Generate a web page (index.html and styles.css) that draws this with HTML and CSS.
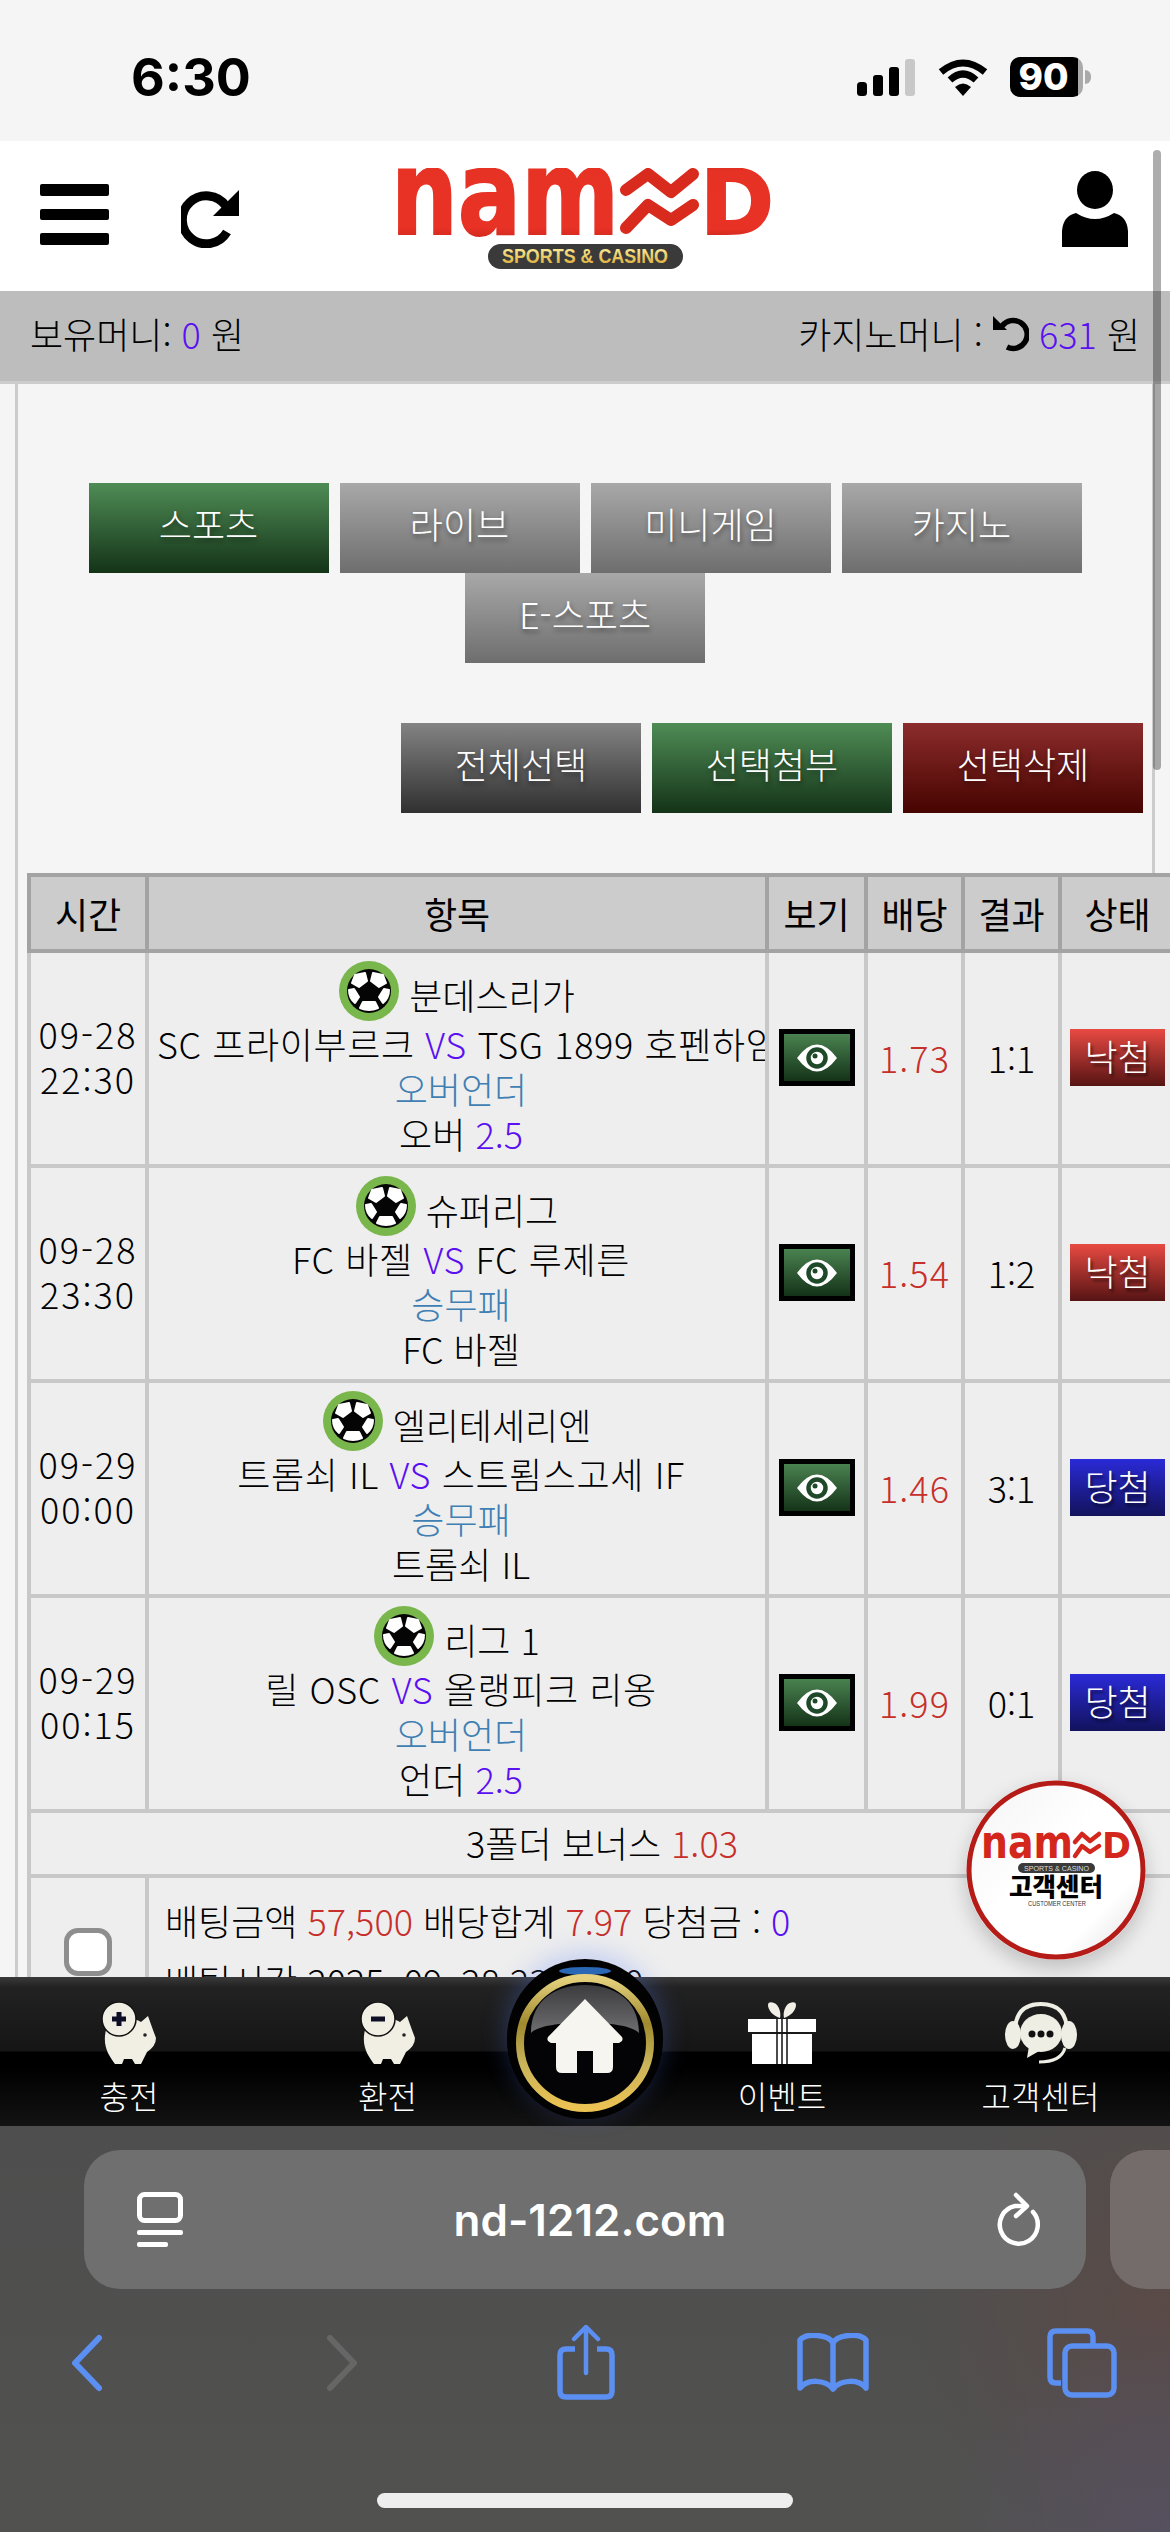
FILE: index.html
```html
<!DOCTYPE html>
<html lang="ko">
<head>
<meta charset="utf-8">
<title>NAMED</title>
<link rel="stylesheet" href="styles.css">
</head>
<body>
<div class="status">
  <span class="clock">6:30</span>
  <div class="status-icons">
    <svg class="signal" width="58" height="37" viewBox="0 0 58 37"><rect x="0" y="23" width="10" height="14" rx="3.500"/><rect x="16" y="16" width="10" height="21" rx="3"/><rect x="32" y="8" width="10" height="29" rx="3"/><rect x="48" y="0" width="10" height="37" rx="3" fill="#c8c8c8"/></svg>
    <svg class="wifi" width="50" height="37" viewBox="0 0 50 37"><path d="M3 13 Q25 -5 47 13" fill="none" stroke="#000" stroke-width="7"/><path d="M12 21 Q25 9 38 21" fill="none" stroke="#000" stroke-width="7"/><path d="M17 28 Q25 21 33 28 L25 37Z"/></svg>
    <div class="battery"><span class="batt-fill">90</span><span class="batt-nub"></span></div>
  </div>
</div>

<main class="main">
  <header class="topbar">
    <div class="top-left">
      <div class="burger"><span></span><span></span><span></span></div>
      <svg class="reload" width="58" height="60" viewBox="0 0 58 60"><path d="M45 18 A24 24 0 1 0 46 44" fill="none" stroke="#000" stroke-width="9"/><path d="M58 2 V28 H32Z"/></svg>
    </div>
    <svg class="logo" width="374" height="101" viewBox="0 0 374 101">
      <defs>
        <linearGradient id="red" x1="0" y1="0" x2="0" y2="1"><stop offset="0" stop-color="#a81c16"/><stop offset=".2" stop-color="#e63224"/><stop offset=".75" stop-color="#e83225"/><stop offset="1" stop-color="#9c1510"/></linearGradient>
        <linearGradient id="gold" x1="0" y1="0" x2="0" y2="1"><stop offset="0" stop-color="#fff6a8"/><stop offset="1" stop-color="#d9a52e"/></linearGradient>
      </defs>
      <text class="logo-word" x="-7" y="66" font-size="118" textLength="228" lengthAdjust="spacingAndGlyphs" fill="url(#red)" stroke="url(#red)" stroke-width="2">nam</text>
      <path d="M228 22 L250 6 L273 24 L295 6 M228 60 L250 37 L273 52 L295 37" fill="none" stroke="#d92a1e" stroke-width="12" stroke-linecap="round" stroke-linejoin="round"/>
      <text class="logo-word" x="302" y="66" font-size="90" textLength="74" lengthAdjust="spacingAndGlyphs" fill="url(#red)" stroke="url(#red)" stroke-width="2">D</text>
      <rect x="90" y="76" width="195" height="25" rx="12.500" fill="#3a3a3a"/>
      <text class="logo-sub" x="104" y="95" font-size="20" textLength="166" lengthAdjust="spacingAndGlyphs" fill="url(#gold)">SPORTS &amp; CASINO</text>
    </svg>
    <svg class="user" width="66" height="76" viewBox="0 0 66 76"><ellipse cx="33" cy="19" rx="18" ry="19"/><path d="M0 76 V60 Q1 45 14 42 Q33 54 52 42 Q65 45 66 60 V76Z"/></svg>
  </header>

  <div class="money">
    <span>보유머니: <b class="num">0</b> 원</span>
    <span class="casino">카지노머니 :
      <svg class="undo" width="36" height="36" viewBox="0 0 36 36"><path d="M9 10 A14 14 0 1 1 14 31" fill="none" stroke="#000" stroke-width="5.500"/><path d="M0 0 V14 H14Z"/></svg>
      <b class="num">631</b> 원</span>
  </div>

  <section class="content">
    <nav class="tabs">
      <a class="btn green">스포츠</a>
      <a class="btn grey">라이브</a>
      <a class="btn grey">미니게임</a>
      <a class="btn grey">카지노</a>
      <a class="btn grey">E-스포츠</a>
    </nav>
    <div class="actions">
      <a class="btn dark">전체선택</a>
      <a class="btn green">선택첨부</a>
      <a class="btn maroon">선택삭제</a>
    </div>

    <table class="bets">
      <colgroup><col class="c-time"><col class="c-item"><col class="c-view"><col class="c-odds"><col class="c-res"><col class="c-state"></colgroup>
      <thead><tr><th>시간</th><th>항목</th><th>보기</th><th>배당</th><th>결과</th><th>상태</th></tr></thead>
      <tbody>
        <tr class="bet">
          <td class="time">09-28<br>22:30</td>
          <td class="item"><div class="league"><svg class="ball" viewBox="0 0 60 60"><use href="#ball"/></svg><span>분데스리가</span></div><div class="teams">SC 프라이부르크 <span class="num">VS</span> TSG 1899 호펜하임</div><div class="market">오버언더</div><div>오버 <span class="num">2.5</span></div></td>
          <td><span class="eye"><svg width="40" height="28" viewBox="0 0 40 28"><use href="#eye"/></svg></span></td>
          <td class="odds">1.73</td><td>1:1</td><td><span class="state lose">낙첨</span></td>
        </tr>
        <tr class="bet">
          <td class="time">09-28<br>23:30</td>
          <td class="item"><div class="league"><svg class="ball" viewBox="0 0 60 60"><use href="#ball"/></svg><span>슈퍼리그</span></div><div class="teams">FC 바젤 <span class="num">VS</span> FC 루제른</div><div class="market">승무패</div><div>FC 바젤</div></td>
          <td><span class="eye"><svg width="40" height="28" viewBox="0 0 40 28"><use href="#eye"/></svg></span></td>
          <td class="odds">1.54</td><td>1:2</td><td><span class="state lose">낙첨</span></td>
        </tr>
        <tr class="bet">
          <td class="time">09-29<br>00:00</td>
          <td class="item"><div class="league"><svg class="ball" viewBox="0 0 60 60"><use href="#ball"/></svg><span>엘리테세리엔</span></div><div class="teams">트롬쇠 IL <span class="num">VS</span> 스트룀스고세 IF</div><div class="market">승무패</div><div>트롬쇠 IL</div></td>
          <td><span class="eye"><svg width="40" height="28" viewBox="0 0 40 28"><use href="#eye"/></svg></span></td>
          <td class="odds">1.46</td><td>3:1</td><td><span class="state win">당첨</span></td>
        </tr>
        <tr class="bet">
          <td class="time">09-29<br>00:15</td>
          <td class="item"><div class="league"><svg class="ball" viewBox="0 0 60 60"><use href="#ball"/></svg><span>리그 1</span></div><div class="teams">릴 OSC <span class="num">VS</span> 올랭피크 리옹</div><div class="market">오버언더</div><div>언더 <span class="num">2.5</span></div></td>
          <td><span class="eye"><svg width="40" height="28" viewBox="0 0 40 28"><use href="#eye"/></svg></span></td>
          <td class="odds">1.99</td><td>0:1</td><td><span class="state win">당첨</span></td>
        </tr>
        <tr class="bonus"><td colspan="6">3폴더 보너스 <span class="odds">1.03</span></td></tr>
        <tr class="summary">
          <td><span class="check"></span></td>
          <td colspan="5" class="sum-text"><div>배팅금액 <span class="odds">57,500</span> 배당합계 <span class="odds">7.97</span> 당첨금 : <span class="num">0</span></div><div>배팅시간 2025. 09. 28 23:10:10</div></td>
        </tr>
      </tbody>
    </table>
  </section>

  <aside class="support">
    <svg width="180" height="180" viewBox="0 0 180 180">
      <defs>
        <linearGradient id="plate" x1="0" y1="0" x2="1" y2="1"><stop offset="0" stop-color="#f4f4f4"/><stop offset=".45" stop-color="#fff"/><stop offset=".75" stop-color="#fff"/><stop offset="1" stop-color="#dcdcdc"/></linearGradient>
      </defs>
      <circle cx="90" cy="90" r="87" fill="url(#plate)" stroke="#b51c17" stroke-width="5"/>
      <text class="logo-word" x="15" y="78" font-size="46" textLength="92" lengthAdjust="spacingAndGlyphs" fill="#d3261c">nam</text>
      <path d="M109 62 L116 54 L124 61 L133 54 M109 76 L116 66 L124 72 L133 66" fill="none" stroke="#d3261c" stroke-width="4.500" stroke-linecap="round" stroke-linejoin="round"/>
      <text class="logo-word" x="136" y="78" font-size="36" textLength="29" lengthAdjust="spacingAndGlyphs" fill="#d3261c">D</text>
      <rect x="52" y="83" width="77" height="10" rx="5" fill="#3a3a3a"/>
      <text class="support-sub" x="58" y="91" font-size="8" textLength="65" lengthAdjust="spacingAndGlyphs" fill="#ddd">SPORTS &amp; CASINO</text>
      <text class="support-ko" x="43" y="116" font-size="25" textLength="94" lengthAdjust="spacingAndGlyphs">고객센터</text>
      <text class="support-en" x="62" y="126" font-size="6.500" textLength="58" lengthAdjust="spacingAndGlyphs" fill="#333">CUSTOMER CENTER</text>
    </svg>
  </aside>
  <div class="thumb"></div>
</main>

<nav class="bottom">
  <a class="bn">
    <svg width="56" height="62" viewBox="0 0 56 62"><use href="#pig"/><path d="M18 10 V24 M11 17 H25" stroke="#0e0e24" stroke-width="5" fill="none"/></svg>
    <span>충전</span>
  </a>
  <a class="bn">
    <svg width="56" height="62" viewBox="0 0 56 62"><use href="#pig"/><path d="M11 17 H25" stroke="#0e0e24" stroke-width="5" fill="none"/></svg>
    <span>환전</span>
  </a>
  <span class="bn-gap"></span>
  <a class="bn">
    <svg width="70" height="62" viewBox="0 0 70 62"><path d="M33 16 C26 14 21 8 21 3 C21 -1 27 0 30 3 C33 7 34 12 33 16Z M37 16 C44 14 49 8 49 3 C49 -1 43 0 40 3 C37 7 36 12 37 16Z" fill="#f1efe6"/><rect x="1" y="17" width="68" height="13" fill="#fff"/><rect x="5" y="32" width="60" height="30" fill="#fff"/><path d="M30 17 V62 M40 17 V62 M35 17 V62" stroke="#111" stroke-width="1.500"/></svg>
    <span>이벤트</span>
  </a>
  <a class="bn">
    <svg width="72" height="62" viewBox="0 0 72 62"><path d="M10 30 C10 8 22 2 36 2 C50 2 62 8 62 30" fill="none" stroke="#efeee4" stroke-width="4"/><ellipse cx="8" cy="33" rx="8" ry="14" fill="#efeee4"/><ellipse cx="64" cy="33" rx="8" ry="14" fill="#efeee4"/><ellipse cx="36" cy="31" rx="21" ry="19" fill="#efeee4"/><path d="M24 44 L22 56 L36 48Z" fill="#efeee4"/><path d="M60 46 Q56 60 34 60" fill="none" stroke="#efeee4" stroke-width="3"/><circle cx="27" cy="32" r="3.500" fill="#111"/><circle cx="36" cy="32" r="3.500" fill="#111"/><circle cx="45" cy="32" r="3.500" fill="#111"/></svg>
    <span>고객센터</span>
  </a>
  <a class="home">
    <svg width="156" height="160" viewBox="0 0 156 160">
      <defs>
        <linearGradient id="ring" x1="0" y1="0" x2="0" y2="1"><stop offset="0" stop-color="#e6d27e"/><stop offset=".35" stop-color="#a08a2e"/><stop offset=".65" stop-color="#c9b35a"/><stop offset="1" stop-color="#ecc253"/></linearGradient>
        <linearGradient id="dome" x1="0" y1="0" x2="0" y2="1"><stop offset="0" stop-color="#3c3c3e"/><stop offset="1" stop-color="#6e6e70"/></linearGradient>
      </defs>
      <ellipse cx="78" cy="80" rx="78" ry="80" fill="#020203"/>
      <ellipse cx="78" cy="12" rx="26" ry="4" fill="#2a67b5"/>
      <ellipse cx="78" cy="84" rx="65" ry="65" fill="#040406" stroke="url(#ring)" stroke-width="8"/>
      <path d="M24 74 C24 40 50 26 78 26 C106 26 132 40 132 74 C120 60 36 60 24 74Z" fill="url(#dome)"/>
      <path d="M78 40 L115 78 Q117 82 112 84 L106 84 V108 Q106 114 100 114 H86 V92 H70 V114 H55 Q49 114 49 108 V84 L44 84 Q39 82 41 78Z" fill="#f6f5ef"/>
    </svg>
  </a>
</nav>

<footer class="safari">
  <div class="url-row">
    <div class="url">
      <svg width="46" height="56" viewBox="0 0 46 56"><rect x="2.500" y="2.500" width="41" height="26" rx="5" fill="none" stroke="#fff" stroke-width="5"/><rect x="0" y="38" width="46" height="5" rx="2" fill="#fff"/><rect x="0" y="50" width="31" height="5" rx="2" fill="#fff"/></svg>
      <span>nd-1212.com</span>
      <svg width="46" height="56" viewBox="0 0 46 56"><path d="M36 20 A19 19 0 1 1 18 14 L26 14" fill="none" stroke="#fff" stroke-width="4.500" stroke-linecap="round"/><path d="M19 3 L30 14 L19 24" fill="none" stroke="#fff" stroke-width="4.500" stroke-linecap="round" stroke-linejoin="round"/></svg>
    </div>
    <div class="url-next"></div>
  </div>
  <div class="tools">
    <svg width="34" height="58" viewBox="0 0 34 58"><path d="M29 4 L5 29 L29 54" fill="none" stroke="#5b8ff2" stroke-width="6" stroke-linecap="round" stroke-linejoin="round"/></svg>
    <svg class="fwd" width="34" height="58" viewBox="0 0 34 58"><path d="M5 4 L29 29 L5 54" fill="none" stroke="#666" stroke-width="6" stroke-linecap="round" stroke-linejoin="round"/></svg>
    <svg width="58" height="75" viewBox="0 0 58 75"><path d="M18 24 H9 Q3 24 3 30 V66 Q3 72 9 72 H49 Q55 72 55 66 V30 Q55 24 49 24 H40" fill="none" stroke="#5b8ff2" stroke-width="5.500"/><path d="M29 48 V4 M17 14 L29 2 L41 14" fill="none" stroke="#5b8ff2" stroke-width="4.500" stroke-linecap="round"/></svg>
    <svg width="72" height="60" viewBox="0 0 72 60"><path d="M36 10 C32 2 10 -1 3 7 V55 C10 46 28 46 36 56 C44 46 62 46 69 55 V7 C62 -1 40 2 36 10 V52" fill="none" stroke="#5b8ff2" stroke-width="5.500" stroke-linejoin="round"/></svg>
    <svg width="70" height="70" viewBox="0 0 70 70"><path d="M14 55 H9 Q3 55 3 49 V9 Q3 3 9 3 H40 Q46 3 46 9 V16" fill="none" stroke="#5b8ff2" stroke-width="5.500"/><rect x="18" y="18" width="49" height="49" rx="7" fill="none" stroke="#5b8ff2" stroke-width="5.500"/></svg>
  </div>
  <div class="home-bar"></div>
</footer>

<svg class="defs" width="0" height="0">
  <defs>
    <g id="ball">
      <circle cx="30" cy="30" r="30" fill="#79b64c"/>
      <circle cx="30" cy="30" r="22" fill="#050505"/>
      <path d="M16 14 L26 12 L28 20 L20 26 L13 22Z" fill="#fff" stroke="#fff" stroke-width="2" stroke-linejoin="round"/>
      <path d="M44 14 L34 12 L32 20 L40 26 L47 22Z" fill="#fff" stroke="#fff" stroke-width="2" stroke-linejoin="round"/>
      <path d="M10 29 L15 28 L20 36 L16 42 Q10 37 10 29Z" fill="#fff" stroke="#fff" stroke-width="2" stroke-linejoin="round"/>
      <path d="M50 29 L45 28 L40 36 L44 42 Q50 37 50 29Z" fill="#fff" stroke="#fff" stroke-width="2" stroke-linejoin="round"/>
      <path d="M24 41 H36 L39 47 Q30 51 21 47Z" fill="#fff" stroke="#fff" stroke-width="2" stroke-linejoin="round"/>
    </g>
    <g id="eye">
      <path d="M0 14 Q20 -13 40 14 Q20 41 0 14Z" fill="#fff"/>
      <circle cx="20" cy="14" r="8.500" fill="#fff" stroke="#1f4a2a" stroke-width="4.500"/>
      <circle cx="18" cy="12" r="2.500" fill="#1f4a2a"/>
    </g>
    <g id="pig">
      <path d="M5 28 C1 44 8 54 14 62 H21 L23 57 H31 L34 62 H40 L46 50 Q55 44 55 36 L52 28 L47 14 L40 20 C30 14 14 16 5 28Z" fill="#f1efe4"/>
      <circle cx="18" cy="17" r="17" fill="#f1efe4" stroke="#111" stroke-width="1.500"/>
      <circle cx="44" cy="33" r="1.800" fill="#222"/>
    </g>
  </defs>
</svg>
</body>
</html>
```

FILE: styles.css
```css
* { box-sizing: border-box; }
html, body { margin: 0; padding: 0; }
body {
  width: 1170px;
  height: 2532px;
  overflow: hidden;
  display: flex;
  flex-direction: column;
  background: #f5f5f5;
  color: #000;
  font-family: "Noto Sans CJK KR", "Noto Sans", sans-serif;
  font-weight: 300;
  font-size: 36px;
  line-height: 45px;
}
.defs { position: absolute; }

/* status bar */
.status {
  height: 141px;
  flex: none;
  display: flex;
  justify-content: space-between;
  align-items: flex-start;
  padding: 49px 79px 0 131px;
}
.clock { font: 700 52px/58px Inter, sans-serif; }
.status-icons { display: flex; align-items: flex-start; padding-top: 10px; }
.signal { margin-right: 23px; }
.wifi { margin-right: 22px; }
.battery { display: flex; align-items: center; margin-top: -2px; }
.batt-fill {
  width: 73px; height: 40px; border-radius: 10px;
  background: linear-gradient(90deg, #000 93%, #aaa 93%);
  color: #fff;
  font: 800 37px/40px Inter, sans-serif;
  text-align: center;
  padding-right: 6px;
}
.batt-nub { width: 6px; height: 14px; margin-left: 2px; background: #aaa; border-radius: 0 6px 6px 0; }

/* main */
.main { flex: 1; min-height: 0; position: relative; overflow: hidden; }
.topbar {
  height: 150px;
  background: #fff;
  display: grid;
  grid-template-columns: 1fr auto 1fr;
  align-items: start;
}
.top-left { display: flex; align-items: flex-start; gap: 72px; padding: 43px 0 0 40px; }
.burger { width: 69px; display: flex; flex-direction: column; gap: 13px; }
.burger span { display: block; height: 11.500px; background: #000; border-radius: 2px; }
.reload { margin-top: 4px; }
.logo { margin-top: 27px; }
.logo-word { font-family: "DejaVu Sans", sans-serif; font-weight: 700; }
.logo-sub { font-family: "Liberation Sans", sans-serif; font-weight: 700; }
.user { justify-self: end; margin: 30px 42px 0 0; }

.money {
  height: 93px;
  padding: 0 30px 6px 30px;
  background: #bdbdbd;
  border-bottom: 3px solid #ccc;
  display: flex;
  justify-content: space-between;
  align-items: center;
  white-space: nowrap;
}
.num { color: #5a10f0; font-weight: 300; }
.undo { vertical-align: -3px; }
.odds { color: #c62f2a; }

.content {
  margin-left: 15px;
  width: 1140px;
  min-height: 1500px;
  border-left: 3px solid #ccc;
  border-right: 3px solid #ccc;
  padding: 99px 0 0 9px;
}
.tabs {
  width: 1134px;
  margin-left: -9px;
  padding: 0 40px;
  display: flex;
  flex-wrap: wrap;
  justify-content: center;
  column-gap: 11px;
}
.actions {
  display: flex;
  justify-content: flex-end;
  column-gap: 11px;
  margin: 60px 0 60px;
  width: 1116px;
}
.btn {
  width: 240px;
  height: 90px;
  display: flex;
  align-items: center;
  justify-content: center;
  padding-bottom: 9px;
  color: #fff;
  text-shadow: 1px 3px 5px rgba(0,0,0,.45);
}
.green  { background: linear-gradient(#4f8c55, #143318); }
.grey   { background: linear-gradient(#a8a8a8, #6e6e6e); }
.dark   { background: linear-gradient(#838383, #303030); }
.maroon { background: linear-gradient(#8c2c2c, #460400); }

/* table */
.bets {
  width: 1150px;
  table-layout: fixed;
  border-collapse: collapse;
  background: #eee;
  text-align: center;
}
.c-time { width: 118px; }
.c-item { width: 620px; }
.c-view { width: 99px; }
.c-odds { width: 97px; }
.c-res { width: 97px; }
.bets th {
  height: 76px;
  background: #ccc;
  border: 4px solid #a3a3a3;
  font-weight: 400;
  padding: 0;
}
.bets td { border: 4px solid #c8c8c8; padding: 0 0 2px; }
.bet td { height: 215px; }
.bets .time { letter-spacing: 2px; padding-bottom: 5px; }
.bet .odds { letter-spacing: 1px; }
.bets .item { overflow: hidden; padding: 8px 0 0; vertical-align: top; }
.item div { white-space: nowrap; padding-left: 8px; }
.item .league { display: flex; align-items: center; justify-content: center; gap: 10px; height: 60px; padding: 0; }
.league span { padding-top: 6px; }
.ball { width: 60px; height: 60px; flex: none; }
.item .teams { overflow: hidden; letter-spacing: .6px; }
.market { color: #3f7fb3; }
.eye {
  display: inline-flex;
  align-items: center;
  justify-content: center;
  width: 76px;
  height: 57px;
  border: 5px solid #000;
  background: linear-gradient(#4a8250, #143318);
  vertical-align: middle;
}
.state {
  display: inline-block;
  width: 95px;
  height: 57px;
  line-height: 53px;
  color: #fff;
  text-shadow: 2px 3px 3px rgba(0,0,0,.6);
  vertical-align: middle;
}
.lose { background: linear-gradient(#e84a42, #561414); }
.win { background: linear-gradient(#2a2ad8, #12125c); }
.bonus td { height: 65px; }
.summary td { vertical-align: top; }
.bets .sum-text { text-align: left; padding: 12px 0 0 16px; line-height: 60px; white-space: nowrap; }
.check {
  display: block;
  width: 48px;
  height: 48px;
  margin: 50px auto 0;
  background: #fff;
  border: 5px solid #8e8e8e;
  border-radius: 14px;
}

.support {
  position: absolute;
  left: 966px;
  top: 1639px;
  width: 180px;
  height: 180px;
  border-radius: 50%;
  box-shadow: 0 8px 20px rgba(0,0,0,.2);
}
.support svg { display: block; }
.support-sub, .support-en { font-family: "Liberation Sans", sans-serif; }
.support-ko { font-family: "Noto Sans CJK KR", sans-serif; font-weight: 900; }
.thumb {
  position: absolute;
  left: 1153px;
  top: 9px;
  width: 8px;
  height: 620px;
  border-radius: 4px;
  background: rgba(0,0,0,.32);
}

/* bottom nav */
.bottom {
  flex: none;
  height: 149px;
  position: relative;
  display: grid;
  grid-template-columns: 258px 259px 136px 258px 259px;
  background: linear-gradient(#3a3a3a 0, #222 10px, #151515 74px, #000 75px, #000 90px, #131313 149px);
  color: #fff;
}
.bn {
  display: flex;
  flex-direction: column;
  align-items: center;
  padding-top: 25px;
  font-size: 32px;
  line-height: 40px;
}
.bn svg { display: block; margin-bottom: 11px; }
.home {
  position: absolute;
  left: 507px;
  top: -18px;
  width: 156px;
  height: 160px;
  border-radius: 50%;
  box-shadow: 0 -6px 26px rgba(90,130,255,.3);
}
.home svg { display: block; }

/* safari */
.safari {
  flex: none;
  height: 406px;
  background:
    radial-gradient(circle at 100% 100%, #56505f 0, rgba(86,80,95,0) 220px),
    radial-gradient(circle at 100% 45%, #5a4a47 0, rgba(90,74,71,0) 260px),
    linear-gradient(#4e4e4e, #515150);
  padding-top: 24px;
}
.url-row { display: flex; gap: 24px; padding-left: 84px; }
.url {
  flex: none;
  width: 1002px;
  height: 139px;
  border-radius: 36px;
  background: #6f6f6f;
  display: flex;
  align-items: center;
  justify-content: space-between;
  padding: 0 43px 0 53px;
  color: #fff;
  font: 600 44px/1 Inter, sans-serif;
}
.url-next { flex: 1; height: 139px; border-radius: 36px 0 0 36px; background: #746c6a; }
.tools {
  display: flex;
  align-items: center;
  margin-top: 36px;
  height: 75px;
  padding-left: 70px;
}
.tools svg { flex: none; display: block; }
.tools .fwd { margin-left: 221px; margin-right: 198px; }
.tools svg:nth-child(3) { margin-right: 182px; }
.tools svg:nth-child(4) { margin-right: 178px; }
.home-bar {
  width: 416px;
  height: 15px;
  margin: 93px auto 0;
  border-radius: 8px;
  background: #eee;
}
```
